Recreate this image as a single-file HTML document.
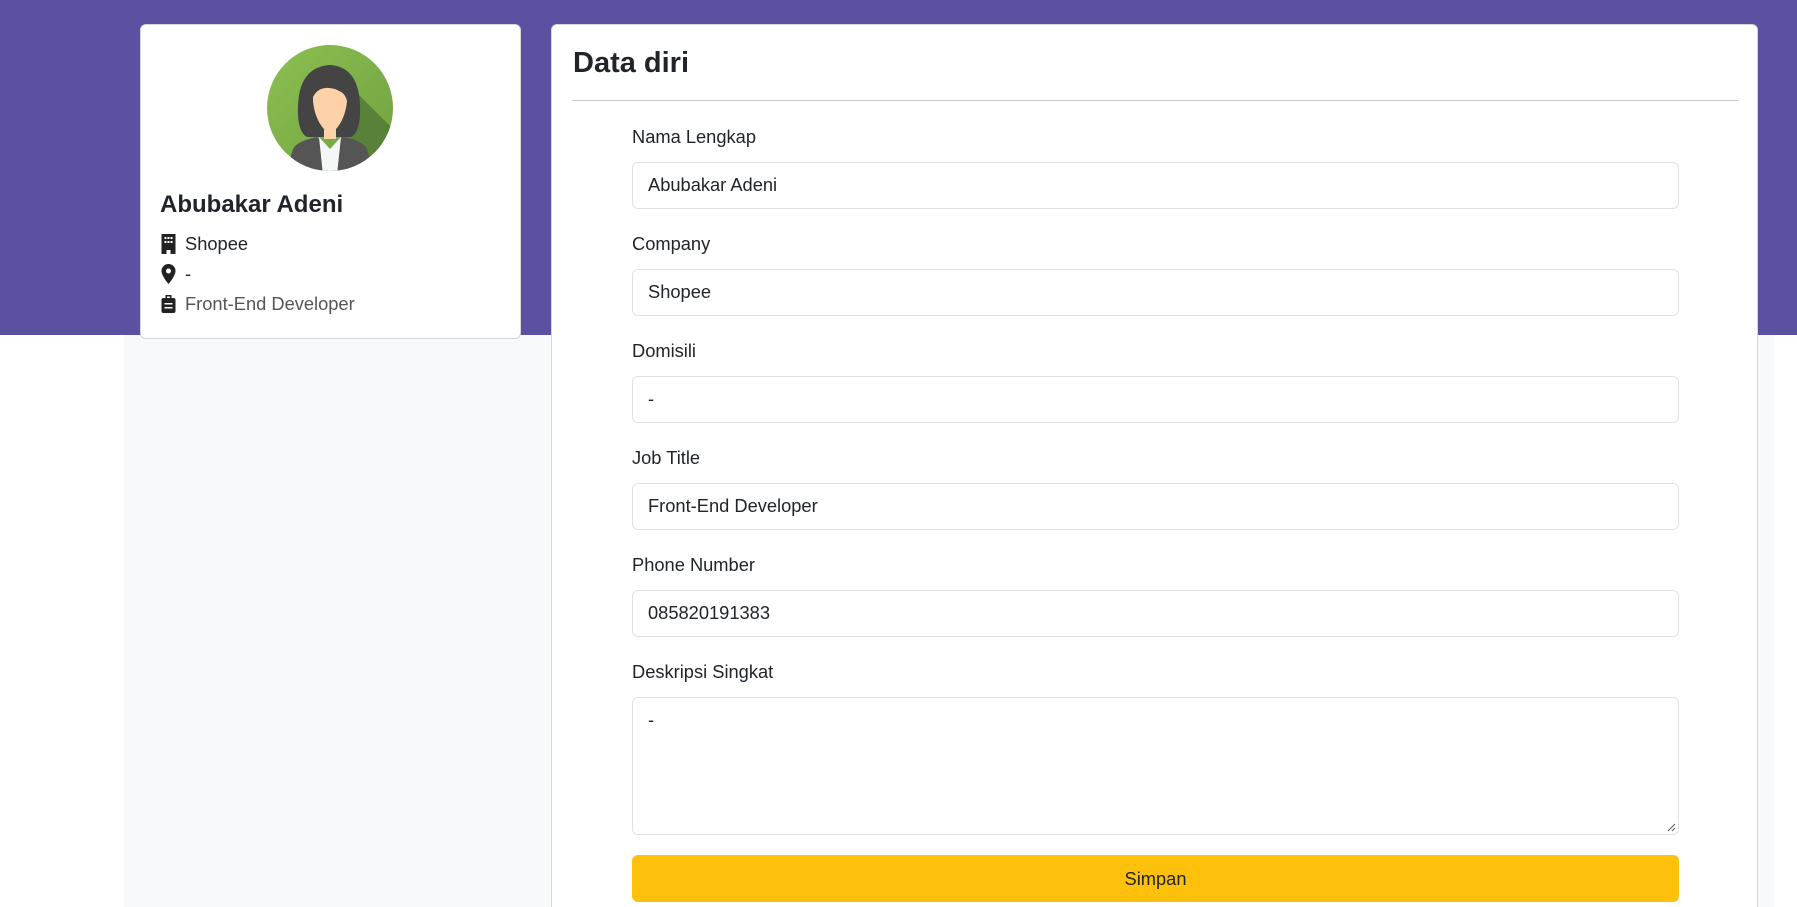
<!DOCTYPE html>
<html style="overflow:hidden;height:907px"><head><style>
*{box-sizing:border-box;margin:0;padding:0}
body{width:1797px;height:907px;overflow:hidden;background:#fff;font-family:"Liberation Sans",sans-serif;color:#212529;position:relative}
.top{position:absolute;left:0;top:0;width:1797px;height:335px;background:#5c50a0}
.gray{position:absolute;left:124px;top:335px;width:1650px;height:572px;background:#f8f9fa}
.card{position:absolute;background:#fff;border:1px solid #d6d6d6;border-radius:6px}
.left{left:140px;top:24px;width:381px;height:315px}
.right{left:551px;top:24px;width:1207px;height:883px;border-bottom:none;border-radius:6px 6px 0 0}
.name{position:absolute;left:19px;top:166px;font-size:24px;font-weight:bold}
.info{position:absolute;left:19px;font-size:18.3px;display:flex;align-items:center}
.info svg{width:17px;height:20px;margin-right:8px}
h2{position:absolute;left:21px;top:22px;font-size:29px;font-weight:bold}
.hr{position:absolute;left:20px;top:75px;width:1167px;height:1px;background:#c8c8c8}
.lbl{position:absolute;left:80px;font-size:18.3px}
.inp{position:absolute;left:80px;width:1047px;height:47px;border:1px solid #dee2e6;border-radius:6px;font-size:18.3px;padding:11px 15px}
.btn{position:absolute;left:80px;top:830px;width:1047px;height:47px;border-radius:6px;background:#fdc00b;font-size:18.3px;text-align:center;line-height:47px}
</style></head><body>
<div class="top"></div><div class="gray"></div>
<div class="card left">
<svg style="position:absolute;left:126px;top:20px" width="126" height="126" viewBox="0 0 126 126">
<defs><clipPath id="c"><circle cx="63" cy="63" r="63"/></clipPath><linearGradient id="g" x1="0" y1="0" x2="1" y2="1"><stop offset="0" stop-color="#8cc152"/><stop offset="1" stop-color="#6fa040"/></linearGradient></defs>
<g clip-path="url(#c)">
<rect width="126" height="126" fill="url(#g)"/>
<path d="M78 36 L140 98 L140 140 L70 140 Z" fill="#5a8139"/>
<path d="M31 70 Q29 22 63 20 Q95 22 93 70 Q92 88 84 92 L40 92 Q32 88 31 70Z" fill="#444"/>
<path d="M46 50 Q52 34 72 46 Q78 48 80 56 Q78 78 63 90 Q48 78 46 56Z" fill="#fdd2a9"/>
<path d="M46 52 Q54 36 78 48 L80 44 Q70 28 52 34 Q44 40 46 52Z" fill="#444"/>
<rect x="57" y="84" width="12" height="10" fill="#fdd2a9"/>
<path d="M18 130 L26 104 Q30 96 50 92 L63 104 L76 92 Q96 96 100 104 L108 130Z" fill="#555"/>
<path d="M52 92 L63 104 L74 92 L70 130 L56 130Z" fill="#f5f6f8"/>
</g></svg>
<div class="name">Abubakar Adeni</div>
<div class="info" style="top:208px"><svg viewBox="0 0 16 20"><path d="M1 0h14v20h-5v-4h-4v4H1z" fill="#222"/><g fill="#fff"><rect x="4" y="3" width="2" height="2"/><rect x="7" y="3" width="2" height="2"/><rect x="10" y="3" width="2" height="2"/><rect x="4" y="7" width="2" height="2"/><rect x="7" y="7" width="2" height="2"/><rect x="10" y="7" width="2" height="2"/></g></svg>Shopee</div>
<div class="info" style="top:238px"><svg viewBox="0 0 16 20"><path d="M8 0a7 7 0 0 1 7 7c0 5-7 13-7 13S1 12 1 7a7 7 0 0 1 7-7z" fill="#222"/><circle cx="8" cy="7" r="2.5" fill="#fff"/></svg>-</div>
<div class="info" style="top:268px;color:#555"><svg viewBox="0 0 16 20"><path d="M5 1h6v3h2a2 2 0 0 1 2 2v11a2 2 0 0 1-2 2H3a2 2 0 0 1-2-2V6a2 2 0 0 1 2-2h2zM6.5 2.5v1.5h3V2.5z" fill="#222"/><rect x="4" y="9" width="8" height="1.5" fill="#fff"/><rect x="4" y="13" width="8" height="1.5" fill="#fff"/></svg>Front-End Developer</div>
</div>
<div class="card right">
<h2>Data diri</h2><div class="hr"></div>
<div class="lbl" style="top:101px">Nama Lengkap</div><div class="inp" style="top:137px">Abubakar Adeni</div>
<div class="lbl" style="top:208px">Company</div><div class="inp" style="top:244px">Shopee</div>
<div class="lbl" style="top:315px">Domisili</div><div class="inp" style="top:351px">-</div>
<div class="lbl" style="top:422px">Job Title</div><div class="inp" style="top:458px">Front-End Developer</div>
<div class="lbl" style="top:529px">Phone Number</div><div class="inp" style="top:565px">085820191383</div>
<div class="lbl" style="top:636px">Deskripsi Singkat</div><div class="inp" style="top:672px;height:138px">-<svg style="position:absolute;right:2px;bottom:2px" width="10" height="10" viewBox="0 0 10 10"><path d="M9 2L2 9M9 6L6 9" stroke="#666" stroke-width="1.2"/></svg></div>
<div class="btn">Simpan</div>
</div>
</body></html>
